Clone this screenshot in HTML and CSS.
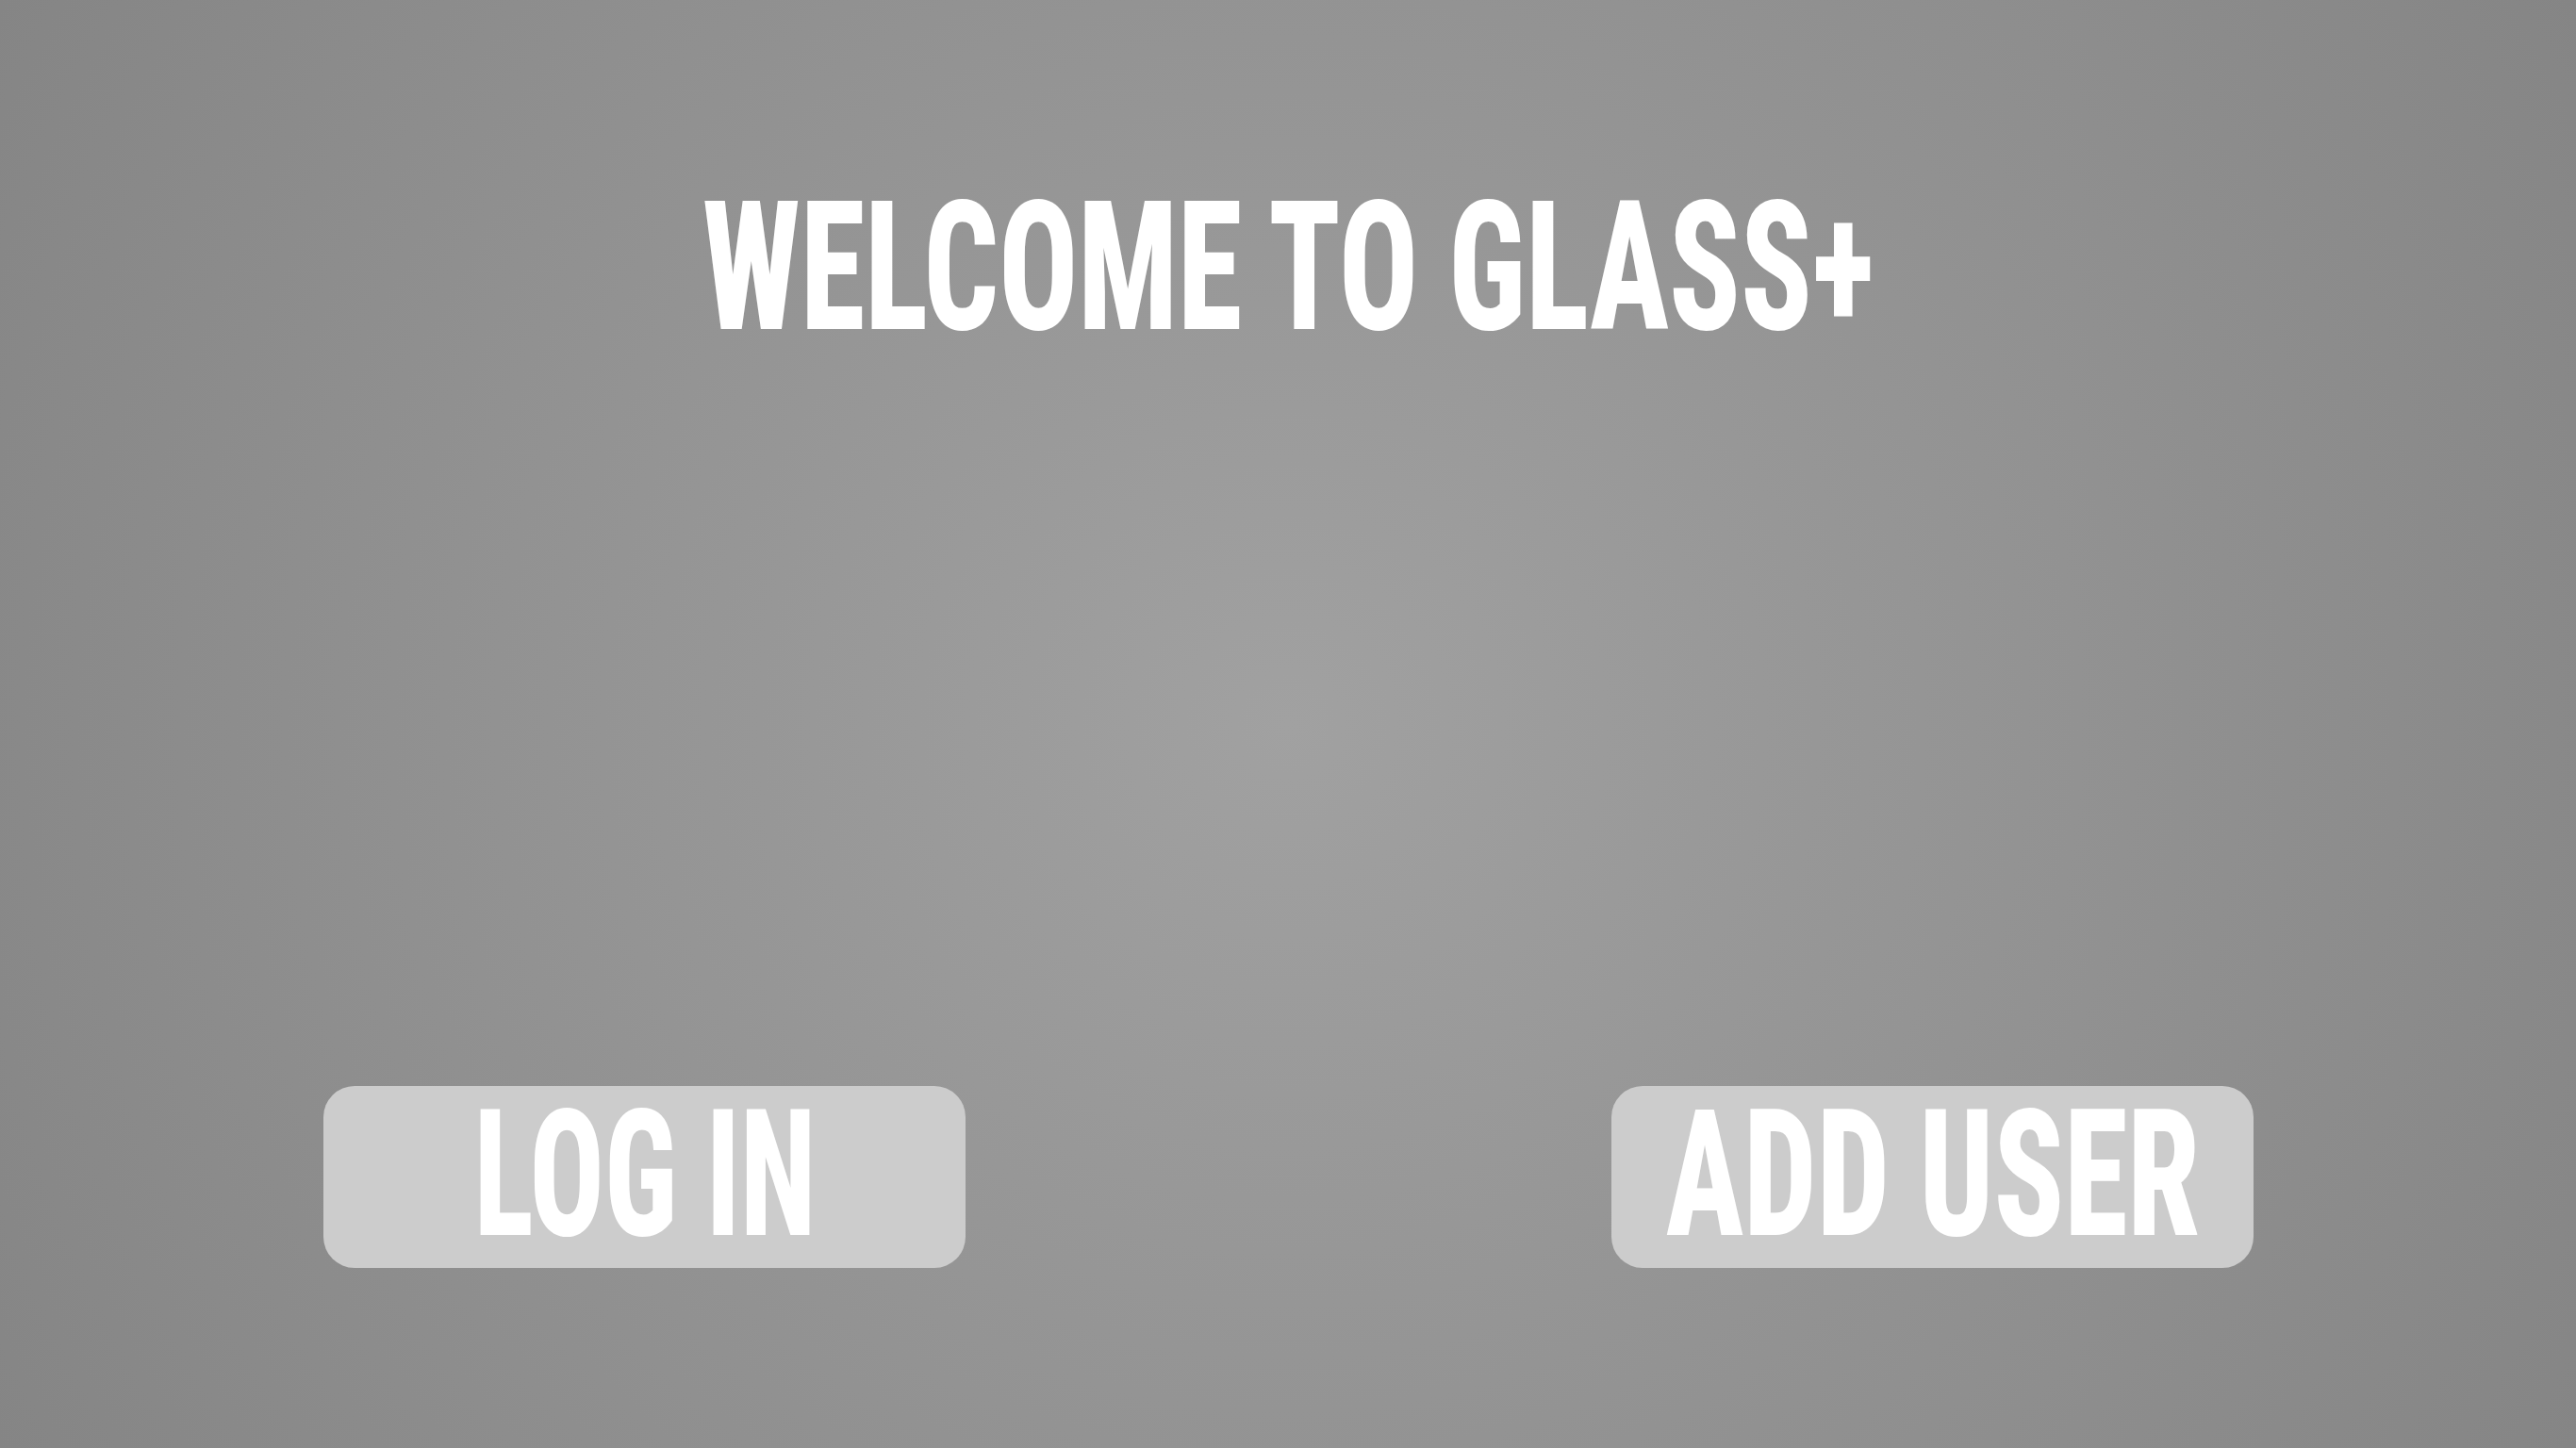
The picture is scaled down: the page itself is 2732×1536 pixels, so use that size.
FILE: index.html
```html
<!DOCTYPE html>
<html lang="en">
<head>
<meta charset="utf-8">
<title>Welcome to Glass+</title>
<link rel="stylesheet" href="styles.css">
</head>
<body>
<main class="screen">
  <h1 class="title"><span class="title-text">WELCOME TO GLASS+</span></h1>
  <div class="spacer"></div>
  <div class="actions">
    <button class="btn" type="button"><span class="btn-text btn-text-login">LOG IN</span></button>
    <button class="btn" type="button"><span class="btn-text btn-text-add">ADD USER</span></button>
  </div>
</main>
</body>
</html>
```
FILE: styles.css
```css
html, body {
  margin: 0;
  padding: 0;
  height: 100%;
}
body {
  background: radial-gradient(circle farthest-corner at 50% 50%, #a1a1a1 0%, #858585 100%);
  font-family: "Roboto", "Open Sans", "DejaVu Sans", sans-serif;
  font-stretch: 75%;
  color: #ffffff;
  overflow: hidden;
}
.screen {
  height: 100vh;
  display: flex;
  flex-direction: column;
}
.title {
  margin: 189px 0 0 0;
  font-size: 191px;
  line-height: 1;
  font-weight: 800;
  text-align: center;
  white-space: nowrap;
}
.title-text {
  display: inline-block;
  transform: scaleX(0.73);
  transform-origin: 50% 50%;
}
.spacer {
  flex: 1;
}
.actions {
  display: flex;
  justify-content: space-between;
  padding: 0 342px 0 343px;
  margin-bottom: 191px;
}
.btn {
  width: 681px;
  height: 193px;
  padding: 0;
  border: none;
  border-radius: 33px;
  background: #cccccc;
  color: #ffffff;
  font-family: inherit;
  font-stretch: 75%;
  font-size: 188px;
  line-height: 1;
  font-weight: 800;
  display: flex;
  justify-content: center;
  align-items: flex-start;
  white-space: nowrap;
  cursor: pointer;
}
.btn-text {
  display: inline-block;
  transform-origin: 50% 50%;
}
.btn-text-login {
  transform: scaleX(0.70);
}
.btn-text-add {
  transform: scaleX(0.73);
}
```
